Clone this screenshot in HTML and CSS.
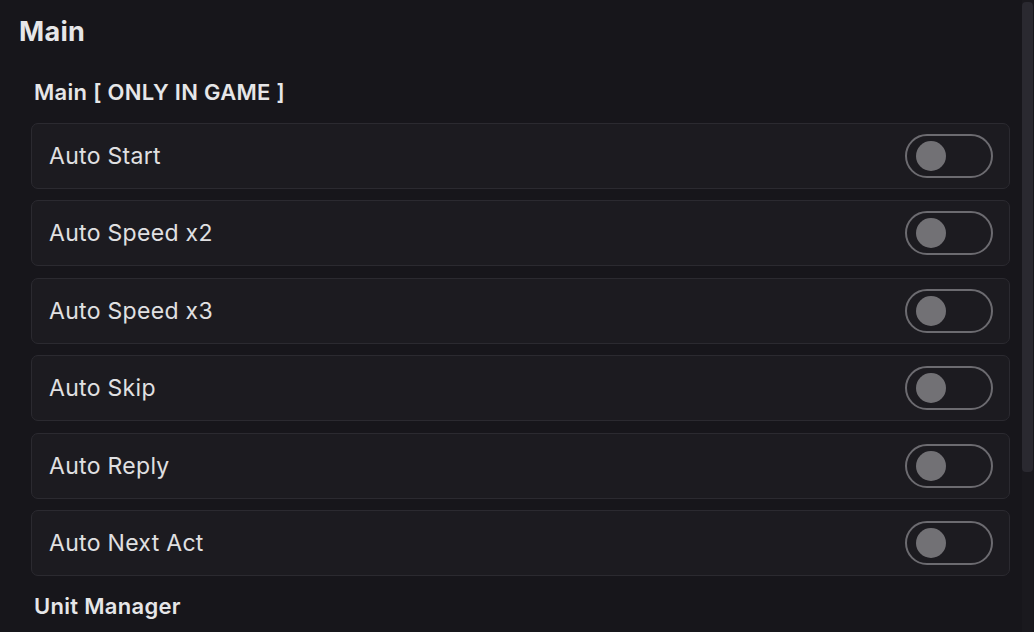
FILE: index.html
```html
<!DOCTYPE html>
<html lang="en">
<head>
  <meta charset="UTF-8">
  <title>Main</title>
  <link rel="stylesheet" href="styles.css">
</head>
<body>
  <div class="window">
    <div class="content">
      <h1 class="page-title">Main</h1>

      <!-- Seccion principal -->
      <div class="section">
        <h2 class="section-title">Main [ ONLY IN GAME ]</h2>
        <div class="toggle-list">
          <div class="row"><span>Auto Start</span><div class="switch"><div class="knob"></div></div></div>
          <div class="row"><span>Auto Speed x2</span><div class="switch"><div class="knob"></div></div></div>
          <div class="row"><span>Auto Speed x3</span><div class="switch"><div class="knob"></div></div></div>
          <div class="row"><span>Auto Skip</span><div class="switch"><div class="knob"></div></div></div>
          <div class="row"><span>Auto Reply</span><div class="switch"><div class="knob"></div></div></div>
          <div class="row"><span>Auto Next Act</span><div class="switch"><div class="knob"></div></div></div>
        </div>
        <h2 class="section-title next">Unit Manager</h2>
      </div>
    </div>

    <!-- Barra de scroll -->
    <div class="scrollbar"><div class="thumb"></div></div>
  </div>
</body>
</html>
```

FILE: styles.css
```css
body {
  margin: 0;
  font-family: Inter, "Open Sans", sans-serif;
  background-color: #17161b;
  color: #e2e2e4;
  overflow: hidden;
}
.window {
  display: flex;
  height: 632px;
}
.content {
  flex: 1;
  padding: 0 12px 0 19px;
}
.page-title {
  margin: 0;
  height: 64px;
  line-height: 64px;
  font-size: 27px;
  font-weight: 700;
  letter-spacing: 0.3px;
  color: #e6e6e8;
}
.section {
  padding-left: 12px;
}
.section-title {
  margin: 0;
  padding-left: 3px;
  height: 56px;
  line-height: 56px;
  font-size: 22px;
  font-weight: 600;
  color: #e6e6e8;
  letter-spacing: 0.3px;
}
.section-title.next {
  height: 60px;
  line-height: 60px;
}
.toggle-list {
  display: flex;
  flex-direction: column;
  gap: 11.4px;
  margin-top: 3px;
}
.row {
  height: 64px;
  display: flex;
  align-items: center;
  justify-content: space-between;
  padding: 0 16px 0 17px;
  background-color: #1c1b20;
  border: 1px solid #2b2a30;
  border-radius: 7px;
  font-size: 23px;
  letter-spacing: 0.3px;
  color: #e0e0e2;
}
.switch {
  box-sizing: border-box;
  width: 88px;
  height: 44px;
  border: 2px solid #6c6b70;
  border-radius: 22px;
  display: flex;
  align-items: center;
  padding-left: 9px;
}
.knob {
  width: 30px;
  height: 30px;
  border-radius: 50%;
  background-color: #727175;
}
.scrollbar {
  width: 11px;
  margin-right: 1px;
  background-color: #1a191e;
}
.thumb {
  height: 470px;
  margin-top: 2px;
  border-radius: 4px;
  background-color: #2a2930;
}
```
